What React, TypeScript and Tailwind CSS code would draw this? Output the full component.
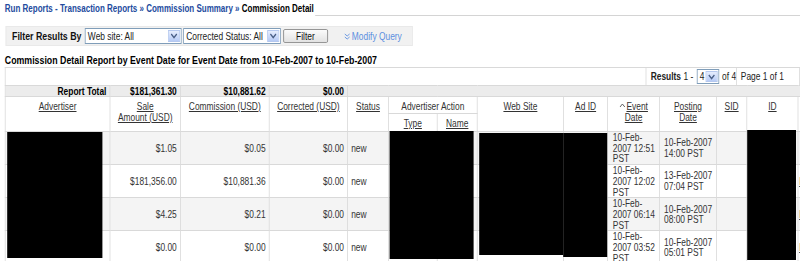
import React from "react";

const FONT = "font-['Liberation_Sans',Arial,sans-serif]";

function Arrow() {
  return (
    <span className="flex h-full w-[15px] items-center justify-center border border-[#b5c8ef] bg-gradient-to-b from-[#e6edfd] to-[#b7cbf6]">
      <svg width="9" height="6" viewBox="0 0 9 6">
        <path d="M1 1 L4.5 4.5 L8 1" fill="none" stroke="#4a5f86" strokeWidth="1.6" />
      </svg>
    </span>
  );
}

function FakeSelect({ label, w }: { label: string; w: string }) {
  return (
    <div className={`flex h-[16px] items-stretch border border-[#7f9db9] bg-white ${w}`}>
      <span className="flex-1 overflow-hidden whitespace-nowrap pl-[3px] text-[10.5px] leading-[14px] text-[#222]">{label}</span>
      <div className="p-[1px]">
        <Arrow />
      </div>
    </div>
  );
}

const cols = [131, 88, 111, 98, 51, 61, 50, 108, 55, 65, 71, 38, 64, 90];

type Row = { sale: string; comm: string; ev: string[]; post: string[]; link: boolean };
const rows: Row[] = [
  { sale: "$1.05", comm: "$0.05", ev: ["10-Feb-", "2007 12:51", "PST"], post: ["10-Feb-2007", "14:00 PST"], link: false },
  { sale: "$181,356.00", comm: "$10,881.36", ev: ["10-Feb-", "2007 12:02", "PST"], post: ["13-Feb-2007", "07:04 PST"], link: true },
  { sale: "$4.25", comm: "$0.21", ev: ["10-Feb-", "2007 06:14", "PST"], post: ["10-Feb-2007", "08:00 PST"], link: true },
  { sale: "$0.00", comm: "$0.00", ev: ["10-Feb-", "2007 03:52", "PST"], post: ["10-Feb-2007", "05:01 PST"], link: true },
];

const th = "border border-[#d9d9d9] align-top font-normal text-[10.5px] leading-[11px] text-[#333] pt-[4px] px-[2px] text-center";
const td = "border border-[#d9d9d9] text-[10.5px] leading-[10.7px] text-[#333] align-middle p-0";
const tot = "border border-[#d9d9d9] pr-[4px] text-right text-[10.5px] font-bold leading-[10px] text-black p-0";

export default function App() {
  return (
    <div className={`${FONT} h-[261px] w-[800px] overflow-hidden bg-white`}>
      <div className="w-[1000px] origin-top-left scale-x-[0.8] pl-[6px]">
        {/* breadcrumb */}
        <div className="flex h-[16px] items-end">
          <div className="pb-[2px] text-[10px] font-bold leading-[11px] whitespace-nowrap">
            <span className="text-[#234b9e]">Run Reports</span>
            <span className="text-[#234b9e]"> - </span>
            <span className="text-[#234b9e]">Transaction Reports</span>
            <span className="text-[#234b9e]"> » </span>
            <span className="text-[#234b9e]">Commission Summary</span>
            <span className="text-[#234b9e]"> » </span>
            <span className="text-black">Commission Detail</span>
          </div>
          <div className="ml-[2px] h-[1px] flex-1 bg-[#d4d4d4]" />
        </div>

        {/* filter bar */}
        <div className="ml-[1px] mt-[10px] flex h-[20px] w-[509px] items-center border border-[#e9e9e9] bg-[#f1f1f1]">
          <span className="ml-[7px] mr-[4px] text-[11px] font-bold leading-[12px] text-[#111] whitespace-nowrap">Filter Results By</span>
          <FakeSelect label="Web site: All" w="w-[121px]" />
          <div className="w-[2px]" />
          <FakeSelect label="Corrected Status: All" w="w-[122px]" />
          <div className="ml-[3px] flex h-[14px] w-[56px] items-center justify-center rounded-[2px] border border-[#8a8a8a] bg-gradient-to-b from-[#fbfbfb] to-[#e2e2e2] text-[10.5px] leading-[12px] text-[#111]">
            Filter
          </div>
          <div className="ml-[20px] flex items-center text-[10.5px] leading-[12px] text-[#5c8fe0] whitespace-nowrap">
            <svg width="8" height="7" viewBox="0 0 8 7" className="mr-[2px]">
              <path d="M1 1 L4 3 L7 1 M1 4 L4 6 L7 4" fill="none" stroke="#5c8fe0" strokeWidth="1" />
            </svg>
            Modify Query
          </div>
        </div>

        {/* title */}
        <div className="mt-[8px] text-[11px] font-bold leading-[12px] text-black whitespace-nowrap">
          Commission Detail Report by Event Date for Event Date from 10-Feb-2007 to 10-Feb-2007
        </div>

        {/* pagination */}
        <div className="mt-[1px] flex h-[18px] border-x border-t border-[#d9d9d9] text-[10.5px] text-[#222]">
          <div className="w-[812px]" />
          <div className="flex w-[113px] items-center border-l border-[#d9d9d9] pl-[5px] whitespace-nowrap">
            <span className="font-bold">Results</span>
            <span className="ml-[3px]">1 -</span>
            <div className="ml-[4px] flex h-[15px] w-[28px] items-stretch border border-[#7f9db9] bg-white">
              <span className="flex-1 pl-[3px] leading-[13px]">4</span>
              <div className="p-[1px]"><Arrow /></div>
            </div>
            <span className="ml-[4px]">of 4</span>
          </div>
          <div className="flex w-[80px] items-center border-l border-[#d9d9d9] pl-[5px] whitespace-nowrap">Page 1 of 1</div>
        </div>

        {/* table */}
        <div className="relative">
          <table className="table-fixed border-collapse" style={{ width: cols.reduce((a, b) => a + b, 0) }}>
            <colgroup>
              {cols.map((c, i) => (
                <col key={i} style={{ width: c }} />
              ))}
            </colgroup>
            <tbody>
              <tr className="h-[11px] bg-[#ececec]">
                <td className={tot}>Report Total</td>
                <td className={tot}>$181,361.30</td>
                <td className={tot}>$10,881.62</td>
                <td className={tot}>$0.00</td>
                <td colSpan={10} className="border border-[#d9d9d9] p-0" />
              </tr>
              <tr className="h-[17px]">
                <th rowSpan={2} className={th}><span className="underline">Advertiser</span></th>
                <th rowSpan={2} className={th}><span className="underline">Sale<br />Amount (USD)</span></th>
                <th rowSpan={2} className={th}><span className="underline">Commission (USD)</span></th>
                <th rowSpan={2} className={th}><span className="underline">Corrected (USD)</span></th>
                <th rowSpan={2} className={th}><span className="underline">Status</span></th>
                <th colSpan={2} className={th}>Advertiser Action</th>
                <th rowSpan={2} className={th}><span className="underline">Web Site</span></th>
                <th rowSpan={2} className={th}><span className="underline">Ad ID</span></th>
                <th rowSpan={2} className={th}>
                  <span className="mr-[1px] inline-block align-top pt-[2px]">
                    <svg width="8" height="5" viewBox="0 0 8 5"><path d="M1 4 L4 1 L7 4" fill="none" stroke="#555" strokeWidth="1" /></svg>
                  </span>
                  <span className="underline">Event</span><br /><span className="underline">Date</span>
                </th>
                <th rowSpan={2} className={th}><span className="underline">Posting<br />Date</span></th>
                <th rowSpan={2} className={th}><span className="underline">SID</span></th>
                <th rowSpan={2} className={th}><span className="underline">ID</span></th>
                <th rowSpan={2} className={th} />
              </tr>
              <tr className="h-[18px]">
                <th className={th}><span className="underline">Type</span></th>
                <th className={th}><span className="underline">Name</span></th>
              </tr>
              {rows.map((r, i) => (
                <tr key={i} className={`${i === 0 ? "h-[32px]" : "h-[33px]"} ${i % 2 === 0 ? "bg-[#f4f4f4]" : "bg-white"}`}>
                  <td className={td} />
                  <td className={`${td} pr-[4px] text-right`}>{r.sale}</td>
                  <td className={`${td} pr-[4px] text-right`}>{r.comm}</td>
                  <td className={`${td} pr-[4px] text-right`}>$0.00</td>
                  <td className={`${td} pl-[4px]`}>new</td>
                  <td className={td} />
                  <td className={td} />
                  <td className={td} />
                  <td className={td} />
                  <td className={`${td} pl-[6px]`}>
                    {r.ev.map((l, j) => (
                      <div key={j}>{l}</div>
                    ))}
                  </td>
                  <td className={`${td} pl-[5px]`}>
                    {r.post.map((l, j) => (
                      <div key={j}>{l}</div>
                    ))}
                  </td>
                  <td className={td} />
                  <td className={td} />
                  <td className={`${td} pl-[1px] text-[#1a3fbf]`}>{r.link ? <span className="underline">Details</span> : null}</td>
                </tr>
              ))}
            </tbody>
          </table>
          {/* redaction overlays */}
          <div className="absolute left-[3px] top-[47px] h-[126px] w-[119px] bg-black" />
          <div className="absolute left-[481px] top-[46px] h-[128px] w-[105px] bg-black" />
          <div className="absolute left-[593px] top-[48px] h-[122px] w-[105px] bg-black" />
          <div className="absolute left-[698px] top-[48px] h-[124px] w-[55px] bg-black" />
          <div className="absolute left-[928px] top-[45px] h-[130px] w-[61px] bg-black" />
        </div>
      </div>
    </div>
  );
}
